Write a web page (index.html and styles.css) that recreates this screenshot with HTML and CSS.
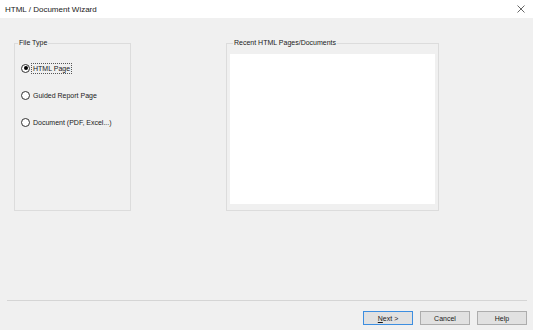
FILE: index.html
```html
<!DOCTYPE html>
<html lang="en">
<head>
    <meta charset="UTF-8">
    <title>HTML / Document Wizard</title>
    <link rel="stylesheet" href="styles.css">
</head>
<body>
    <!-- title bar -->
    <div class="title-bar">
      <span class="title-text">HTML / Document Wizard</span>
      <svg class="close-icon" width="8" height="8" viewBox="0 0 8 8">
        <path d="M0.5 0.5 L7.5 7.5 M7.5 0.5 L0.5 7.5" stroke="#555" stroke-width="0.9" fill="none"/>
      </svg>
    </div>

    <!-- main content -->
    <div class="wizard-body">
      <fieldset class="group file-type">
        <legend>File Type</legend>
        <div class="radio-list">
          <label class="radio-row">
            <span class="radio checked"></span>
            <span class="radio-label focused">HTML Page</span>
          </label>
          <label class="radio-row">
            <span class="radio"></span>
            <span class="radio-label">Guided Report Page</span>
          </label>
          <label class="radio-row">
            <span class="radio"></span>
            <span class="radio-label">Document (PDF, Excel...)</span>
          </label>
        </div>
      </fieldset>

      <fieldset class="group recent">
        <legend>Recent HTML Pages/Documents</legend>
        <div class="recent-list"></div>
      </fieldset>
    </div>

    <div class="separator"></div>

    <div class="button-row">
      <button class="btn default"><u>N</u>ext &gt;</button>
      <button class="btn">Cancel</button>
      <button class="btn">Help</button>
    </div>
</body>
</html>
```

FILE: styles.css
```css
* {
  box-sizing: border-box;
  margin: 0;
  padding: 0;
}

body {
  width: 533px;
  height: 330px;
  background-color: #f0f0f0;
  font-family: "Liberation Sans", Arial, sans-serif;
  font-size: 7px;
  color: #000;
  display: flex;
  flex-direction: column;
  overflow: hidden;
}

/* title bar */
.title-bar {
  height: 18px;
  background-color: #fff;
  display: flex;
  align-items: center;
  justify-content: space-between;
  padding: 0 8px 0 5px;
  flex-shrink: 0;
}

.title-text {
  font-size: 8px;
  color: #1a1a1a;
}

.close-icon {
  display: block;
}

/* group boxes */
.wizard-body {
  display: flex;
  gap: 95px;
  padding: 20px 0 0 14px;
}

.group {
  border: 1px solid #dcdcdc;
  padding: 0;
  min-width: 0;
}

.group legend {
  font-size: 7px;
  line-height: 10px;
  padding: 0 1px;
  margin-left: 3px;
  color: #1a1a1a;
}

.file-type {
  width: 117px;
}

.recent {
  width: 213px;
  padding: 6px 3px 6px 3px;
}

.recent-list {
  height: 150px;
  background-color: #fff;
}

/* radios */
.radio-list {
  display: flex;
  flex-direction: column;
  gap: 17px;
  padding: 15px 0 0 6px;
}

.radio-row {
  display: flex;
  align-items: center;
  height: 10px;
  gap: 1px;
  color: #1a1a1a;
}

.radio {
  width: 9px;
  height: 9px;
  border: 1px solid #333;
  border-radius: 50%;
  background-color: #fff;
  display: flex;
  align-items: center;
  justify-content: center;
}

.radio.checked::after {
  content: "";
  width: 4px;
  height: 4px;
  border-radius: 50%;
  background-color: #000;
}

.radio-label {
  padding: 0 1px;
  border: 1px solid transparent;
  line-height: 9px;
}

.radio-label.focused {
  border: 1px dotted #555;
}

/* footer */
.separator {
  margin: auto 6px 0 7px;
  height: 1px;
  background-color: #d5d5d5;
}

.button-row {
  display: flex;
  justify-content: flex-end;
  gap: 7px;
  padding: 10px 6px 5px 0;
}

.btn {
  width: 50px;
  height: 14px;
  border: 1px solid #adadad;
  background-color: #e1e1e1;
  font-family: "Liberation Sans", Arial, sans-serif;
  font-size: 7px;
  color: #1a1a1a;
}

.btn.default {
  border-color: #3d8ee0;
}
```
